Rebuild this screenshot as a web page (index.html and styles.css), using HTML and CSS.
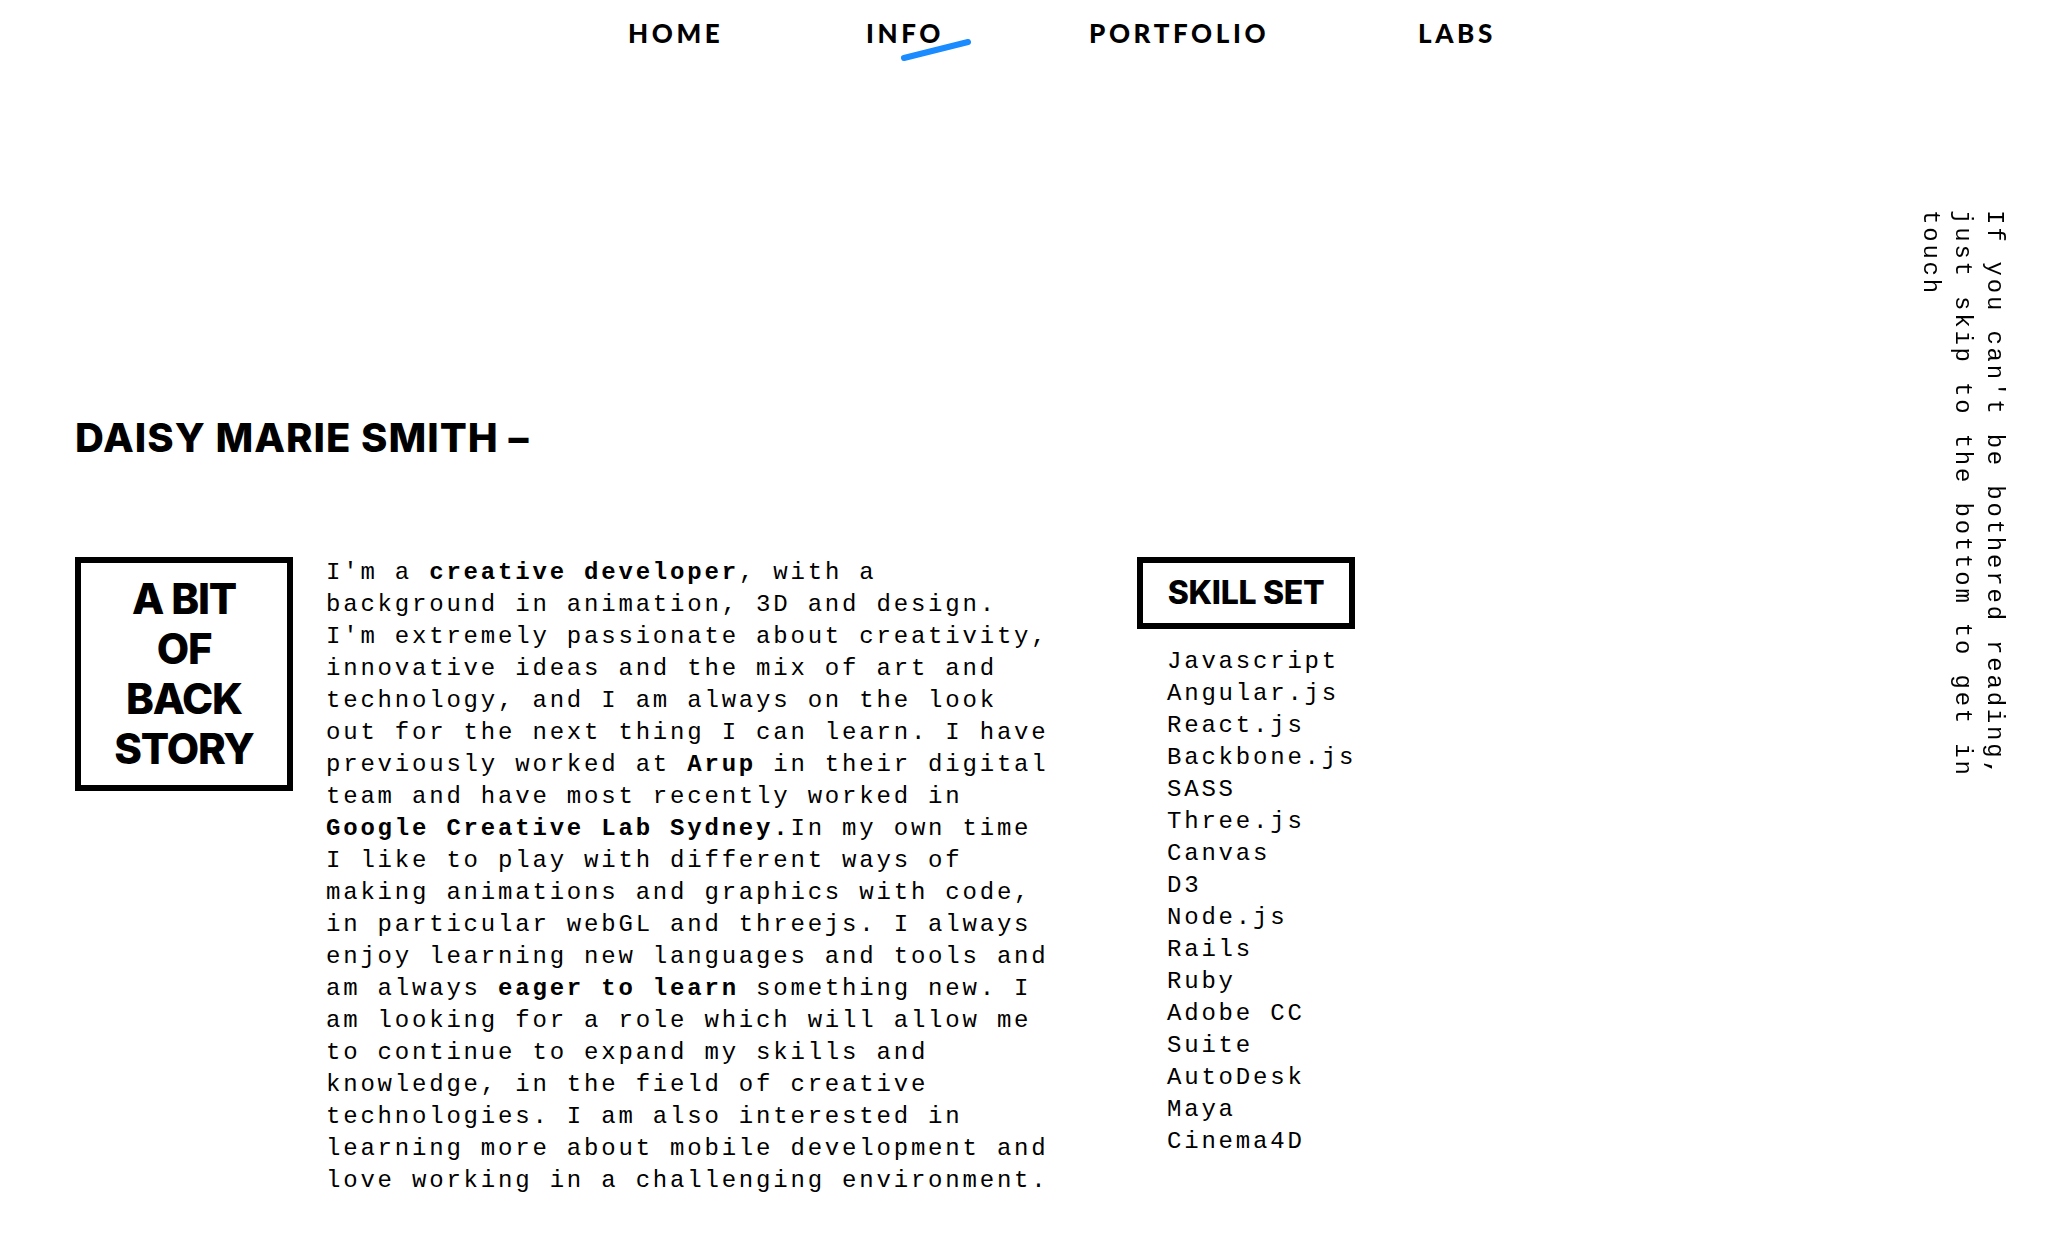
FILE: index.html
```html
<!DOCTYPE html>
<html lang="en">
<head>
<meta charset="utf-8">
<title>Daisy Marie Smith — Info</title>
<link rel="stylesheet" href="styles.css">
</head>
<body>
<nav class="nav">
  <a class="nav-link" href="#">HOME</a>
  <a class="nav-link active" href="#">INFO</a>
  <a class="nav-link" href="#">PORTFOLIO</a>
  <a class="nav-link" href="#">LABS</a>
</nav>

<aside class="side-note">If you can't be bothered reading, just skip to the bottom to get in touch</aside>

<main class="content">
  <h1 class="name">DAISY MARIE SMITH –</h1>
  <section class="about">
    <h2 class="story-box">A BIT<br>OF<br>BACK<br>STORY</h2>
    <p class="bio">I'm a <b>creative developer</b>, with a background in animation, 3D and design. I'm extremely passionate about creativity, innovative ideas and the mix of art and technology, and I am always on the look out for the next thing I can learn. I have previously worked at <b>Arup</b> in their digital team and have most recently worked in <b>Google Creative Lab Sydney.</b>In my own time I like to play with different ways of making animations and graphics with code, in particular webGL and threejs. I always enjoy learning new languages and tools and am always <b>eager to learn</b> something new. I am looking for a role which will allow me to continue to expand my skills and knowledge, in the field of creative technologies. I am also interested in learning more about mobile development and love working in a challenging environment.</p>
    <div class="skills">
      <h2 class="skill-box">SKILL SET</h2>
      <ul class="skill-list">
        <li>Javascript</li>
        <li>Angular.js</li>
        <li>React.js</li>
        <li>Backbone.js</li>
        <li>SASS</li>
        <li>Three.js</li>
        <li>Canvas</li>
        <li>D3</li>
        <li>Node.js</li>
        <li>Rails</li>
        <li>Ruby</li>
        <li>Adobe CC</li>
        <li>Suite</li>
        <li>AutoDesk</li>
        <li>Maya</li>
        <li>Cinema4D</li>
      </ul>
    </div>
  </section>
</main>
</body>
</html>
```

FILE: styles.css
```css
* { box-sizing: border-box; }

html, body {
  margin: 0;
  padding: 0;
  background: #fff;
  color: #000;
}

body {
  font-family: "Liberation Mono", "Courier New", monospace;
  min-height: 1248px;
}

/* ---------- navigation ---------- */
.nav {
  display: grid;
  grid-template-columns: 238px 223px 329px auto;
  padding: 18px 0 0 628px;
  height: 48px;
}

.nav-link {
  position: relative;
  justify-self: start;
  font-family: Lato, "Liberation Sans", sans-serif;
  font-weight: 900;
  font-size: 26px;
  line-height: 30px;
  letter-spacing: 3.6px;
  color: #000;
  text-decoration: none;
}

.nav-link.active::after {
  content: "";
  position: absolute;
  left: 34px;
  top: 29px;
  width: 72px;
  height: 6px;
  border-radius: 3px;
  background: #1a8cff;
  transform: rotate(-14deg);
}

/* ---------- side note ---------- */
.side-note {
  position: fixed;
  top: 210px;
  right: 60px;
  height: 600px;
  writing-mode: vertical-rl;
  font-size: 24px;
  line-height: 32px;
  letter-spacing: 2.8px;
  color: #000;
}

/* ---------- content ---------- */
.content {
  padding: 0 0 0 75px;
}

.name {
  margin: 370px 0 0;
  font-family: Inter, "Liberation Sans", sans-serif;
  font-weight: 800;
  font-size: 40px;
  line-height: 40px;
  letter-spacing: 1px;
}

.about {
  display: flex;
  align-items: flex-start;
  margin-top: 99px;
}

.story-box {
  flex: 0 0 218px;
  width: 218px;
  margin: 0;
  padding: 11px 6px;
  border: 6px solid #000;
  text-align: center;
  font-family: Inter, "Liberation Sans", sans-serif;
  font-weight: 800;
  font-size: 42px;
  line-height: 50px;
  letter-spacing: -1.2px;
}

.bio {
  flex: 0 0 730px;
  width: 730px;
  margin: 0 0 0 33px;
  font-size: 24px;
  line-height: 32px;
  letter-spacing: 2.8px;
}

.bio b { font-weight: 700; }

.skills {
  margin-left: 81px;
}

.skill-box {
  width: 218px;
  height: 72px;
  margin: 0;
  border: 6px solid #000;
  text-align: center;
  font-family: Inter, "Liberation Sans", sans-serif;
  font-weight: 800;
  font-size: 32px;
  line-height: 60px;
  letter-spacing: -0.3px;
}

.skill-list {
  list-style: none;
  margin: 17px 0 0;
  padding: 0 0 0 30px;
  font-size: 24px;
  line-height: 32px;
  letter-spacing: 2.8px;
}
```
